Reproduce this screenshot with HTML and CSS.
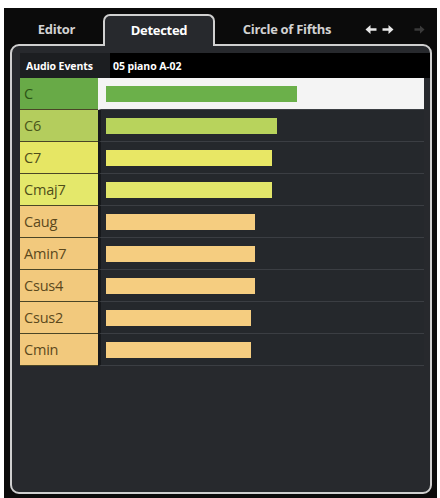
FILE: index.html
```html
<!DOCTYPE html>
<html>
<head>
<meta charset="utf-8">
<link rel="stylesheet" href="styles.css">
</head>
<body>
<div class="window">
  <div class="tabbar">
    <div class="tab tab-editor">Editor</div>
    <div class="tab tab-active">Detected</div>
    <div class="tab tab-circle">Circle of Fifths</div>
    <div class="nav">
      <svg class="arrow" width="12" height="11" viewBox="0 0 12 11"><path d="M0.5 5.5L5.5 1v3.2H11.5v2.6H5.5V10z" fill="#e8e8e8"/></svg>
      <svg class="arrow" width="12" height="11" viewBox="0 0 12 11"><path d="M11.5 5.5L6.5 1v3.2H0.5v2.6H6.5V10z" fill="#e8e8e8"/></svg>
      <svg class="arrow arrow-off" width="11" height="11" viewBox="0 0 12 11"><path d="M11.5 5.5L6.5 1v3.2H0.5v2.6H6.5V10z" fill="#3a3a3a"/></svg>
    </div>
  </div>
  <div class="panel">
    <div class="header">
      <div class="header-label">Audio Events</div>
      <div class="header-value">05 piano A-02</div>
    </div>
    <div class="rows">
      <div class="row selected"><div class="name c-green">C</div><div class="track"><div class="bar b-green" style="width:191px"></div></div></div>
      <div class="row"><div class="name c-lime">C6</div><div class="track"><div class="bar b-lime" style="width:171px"></div></div></div>
      <div class="row"><div class="name c-yellow">C7</div><div class="track"><div class="bar b-yellow" style="width:166px"></div></div></div>
      <div class="row"><div class="name c-yellow2">Cmaj7</div><div class="track"><div class="bar b-yellow2" style="width:166px"></div></div></div>
      <div class="row"><div class="name c-orange">Caug</div><div class="track"><div class="bar b-orange" style="width:149px"></div></div></div>
      <div class="row"><div class="name c-orange">Amin7</div><div class="track"><div class="bar b-orange" style="width:149px"></div></div></div>
      <div class="row"><div class="name c-orange">Csus4</div><div class="track"><div class="bar b-orange" style="width:149px"></div></div></div>
      <div class="row"><div class="name c-orange">Csus2</div><div class="track"><div class="bar b-orange" style="width:145px"></div></div></div>
      <div class="row"><div class="name c-orange">Cmin</div><div class="track"><div class="bar b-orange" style="width:145px"></div></div></div>
    </div>
  </div>
</div>
</body>
</html>
```
FILE: styles.css
```css
html, body {
  margin: 0;
  padding: 0;
  background: #ffffff;
}
body {
  font-family: "Open Sans", "DejaVu Sans", sans-serif;
}
.window {
  margin: 8px 3px 0 4px;
  height: 490px;
  background: #0b0b0b;
  padding: 6px 5px 0 6px;
  box-sizing: border-box;
}
.tabbar {
  display: flex;
  align-items: flex-end;
  height: 30px;
  position: relative;
  z-index: 2;
}
.tab {
  height: 30px;
  display: flex;
  align-items: center;
  justify-content: center;
  font-size: 13px;
  font-weight: 700;
  letter-spacing: -0.3px;
  color: #d2d2d2;
  box-sizing: border-box;
}
.tab-editor {
  width: 93px;
}
.tab-active {
  width: 112px;
  color: #ffffff;
  background: #27292d;
  border: 2px solid #d0d0d0;
  border-bottom: none;
  border-radius: 7px 7px 0 0;
  height: 32px;
  margin-bottom: -2px;
  padding-bottom: 2px;
}
.tab-circle {
  width: 144px;
}
.nav {
  display: flex;
  align-items: center;
  height: 30px;
  padding-left: 6px;
  gap: 5px;
}
.arrow-off {
  margin-left: 15px;
}
.panel {
  height: 450px;
  box-sizing: border-box;
  border: 2px solid #cfcfcf;
  border-radius: 9px;
  background: #27292d;
  padding: 7px 0 0 8px;
}
.header {
  display: flex;
  height: 25px;
  font-size: 10.5px;
  font-weight: 700;
  color: #ffffff;
  letter-spacing: -0.1px;
}
.header-label {
  width: 90px;
  background: #1c1e21;
  display: flex;
  align-items: center;
  padding-left: 6px;
  box-sizing: border-box;
  white-space: nowrap;
  overflow: hidden;
}
.header-value {
  flex: 1;
  background: #000000;
  display: flex;
  align-items: center;
  padding-left: 3px;
}
.rows {
  display: flex;
  flex-direction: column;
  margin-right: 6px;
}
.row {
  display: flex;
  height: 32px;
}
.name {
  width: 78px;
  box-sizing: border-box;
  padding-left: 4px;
  display: flex;
  align-items: center;
  font-size: 14.5px;
  border-bottom: 1px solid #4a4526;
  letter-spacing: -0.2px;
}
.track {
  flex: 1;
  display: flex;
  align-items: center;
  padding-left: 5px;
  border-left: 3px solid #17191c;
  background: #25282c;
  border-bottom: 1px solid #3b3e43;
  box-sizing: border-box;
}
.selected .track {
  background: #f4f4f4;
  border-left-color: #f4f4f4;
}
.bar {
  height: 16px;
}
.c-green { background: #68aa47; color: #2c5416; }
.c-lime { background: #b4cd5d; color: #4a5719; }
.c-yellow { background: #e6e664; color: #4f4d1a; }
.c-yellow2 { background: #e4e86b; color: #4f4d1a; }
.c-orange { background: #f2c97d; color: #5b481c; }
.b-green { background: #6bb04a; }
.b-lime { background: #b8d35c; }
.b-yellow { background: #e8e765; }
.b-yellow2 { background: #e2e66a; }
.b-orange { background: #f5cd80; }
```
